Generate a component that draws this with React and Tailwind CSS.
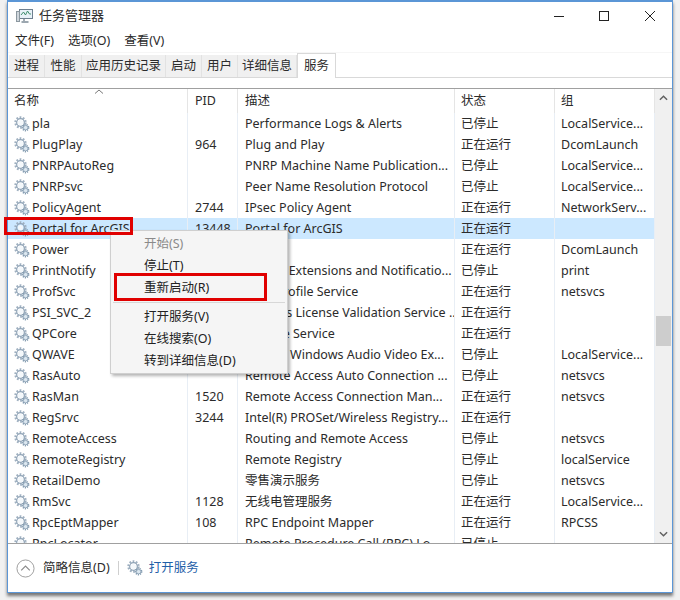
import React from 'react'

const rows = [
  ['pla', '', 'Performance Logs & Alerts', '已停止', 'LocalService...'],
  ['PlugPlay', '964', 'Plug and Play', '正在运行', 'DcomLaunch'],
  ['PNRPAutoReg', '', 'PNRP Machine Name Publication...', '已停止', 'LocalService...'],
  ['PNRPsvc', '', 'Peer Name Resolution Protocol', '已停止', 'LocalService...'],
  ['PolicyAgent', '2744', 'IPsec Policy Agent', '正在运行', 'NetworkServ...'],
  ['Portal for ArcGIS', '13448', 'Portal for ArcGIS', '正在运行', ''],
  ['Power', '', 'Power', '正在运行', 'DcomLaunch'],
  ['PrintNotify', '', 'Printer Extensions and Notificatio...', '已停止', 'print'],
  ['ProfSvc', '', 'User Profile Service', '正在运行', 'netsvcs'],
  ['PSI_SVC_2', '', 'Protexis License Validation Service ...', '正在运行', ''],
  ['QPCore', '', 'QPCore Service', '正在运行', ''],
  ['QWAVE', '', 'Quality Windows Audio Video Ex...', '已停止', 'LocalService...'],
  ['RasAuto', '', 'Remote Access Auto Connection ...', '已停止', 'netsvcs'],
  ['RasMan', '1520', 'Remote Access Connection Man...', '正在运行', 'netsvcs'],
  ['RegSrvc', '3244', 'Intel(R) PROSet/Wireless Registry...', '正在运行', ''],
  ['RemoteAccess', '', 'Routing and Remote Access', '已停止', 'netsvcs'],
  ['RemoteRegistry', '', 'Remote Registry', '已停止', 'localService'],
  ['RetailDemo', '', '零售演示服务', '已停止', 'netsvcs'],
  ['RmSvc', '1128', '无线电管理服务', '正在运行', 'LocalService...'],
  ['RpcEptMapper', '108', 'RPC Endpoint Mapper', '正在运行', 'RPCSS'],
  ['RpcLocator', '', 'Remote Procedure Call (RPC) Lo...', '已停止', ''],
]

const tabs = [
  ['进程', 'w-[36px]'],
  ['性能', 'w-[37px]'],
  ['应用历史记录', 'w-[84px]'],
  ['启动', 'w-[36px]'],
  ['用户', 'w-[36px]'],
  ['详细信息', 'w-[59px]'],
]

function Gear({ className }) {
  return (
    <svg viewBox="0 0 16 16" className={className} fill="none">
      <circle cx="6.5" cy="6.5" r="5" stroke="#9fb0c0" strokeWidth="2.4" strokeDasharray="1.7 1.45" />
      <circle cx="6.5" cy="6.5" r="3.8" stroke="#8fa3b6" strokeWidth="1.2" />
      <circle cx="6.5" cy="6.5" r="2.6" fill="#f4f8fb" />
      <circle cx="11.6" cy="11.6" r="3" stroke="#7f98ae" strokeWidth="1.6" strokeDasharray="1.2 0.9" />
      <circle cx="11.6" cy="11.6" r="2.2" fill="#dbe7f0" stroke="#8aa0b4" strokeWidth="0.8" />
    </svg>
  )
}

function AppIcon() {
  return (
    <svg viewBox="0 0 18 16" className="w-[18px] h-[16px]" fill="none">
      <rect x="3.5" y="1.5" width="13" height="9" fill="#e8f1f8" stroke="#6d7f8f" />
      <path d="M5 7l2.5-3 2 3 2-4 2 3h1.5" stroke="#3f8f6f" />
      <path d="M8 11v2M5.5 14h7" stroke="#7c8a96" strokeWidth="1.4" />
      <rect x="0.5" y="3.5" width="3" height="10" fill="#cfd6dc" stroke="#8b979f" />
    </svg>
  )
}

function MenuItem({ children, disabled }) {
  return (
    <div className={`h-[22px] pl-[33px] leading-[22px] ${disabled ? 'text-[#8a8a8a]' : 'text-[#222]'}`}>{children}</div>
  )
}

export default function App() {
  return (
    <div className="relative w-[680px] h-[600px] overflow-hidden bg-[#f1f1f1] pl-[7px] text-[12.5px] text-[#2b2b2b] font-['Noto_Sans','Noto_Sans_CJK_SC',sans-serif]">
      <div className="w-[666px] h-[593px] bg-white border border-[#5b96d6] border-t-2 flex flex-col shadow-[0_3px_3px_#777]">
        {/* title bar */}
        <div className="h-[28px] flex items-center pl-[8px] shrink-0">
          <AppIcon />
          <span className="ml-[5px] text-[13px]">任务管理器</span>
          <div className="ml-auto flex items-center">
            <svg viewBox="0 0 12 12" className="w-[12px] h-[12px] mr-[33px]"><path d="M1 6.5h10" stroke="#222" strokeWidth="1" /></svg>
            <svg viewBox="0 0 12 12" className="w-[12px] h-[12px] mr-[34px]"><rect x="1.5" y="1.5" width="9" height="9" fill="none" stroke="#222" /></svg>
            <svg viewBox="0 0 12 12" className="w-[12px] h-[12px] mr-[16px]"><path d="M1 1l10 10M11 1L1 11" stroke="#222" /></svg>
          </div>
        </div>
        {/* menu */}
        <div className="h-[22px] flex items-center gap-[14px] pl-[7px] shrink-0">
          <span>文件(F)</span>
          <span>选项(O)</span>
          <span>查看(V)</span>
        </div>
        {/* tabs */}
        <div className="h-[26px] flex items-end border-t border-[#f6f6f6] shrink-0 relative">
          <div className="flex-1 h-[25px] flex border-b border-[#d9d9d9] pl-px">
            {tabs.map(([t, w]) => (
              <div key={t} className={`${w} mt-[2px] h-[22px] bg-[#f0f0f0] border-r border-[#e2e2e2] flex items-center justify-center`}>{t}</div>
            ))}
            <div className="w-[39px] h-[25px] bg-white border border-b-0 border-[#d9d9d9] flex items-center justify-center -mb-px">服务</div>
          </div>
        </div>
        <div className="h-[10px] shrink-0" />
        {/* table */}
        <div className="h-[456px] flex border-t border-b border-[#a0a0a0] shrink-0">
          <div className="w-[647px] flex flex-col overflow-hidden">
            <div className="h-[24px] shrink-0 grid grid-cols-[180px_50px_217px_100px_100px] relative">
              <div className="border-r border-[#e5e5e5] pl-[6px] leading-[24px]">名称</div>
              <div className="border-r border-[#e5e5e5] pl-[7px] leading-[24px]">PID</div>
              <div className="border-r border-[#e5e5e5] pl-[7px] leading-[24px]">描述</div>
              <div className="border-r border-[#e5e5e5] pl-[6px] leading-[24px]">状态</div>
              <div className="border-r border-[#e5e5e5] pl-[6px] leading-[24px]">组</div>
              <svg viewBox="0 0 10 5" className="absolute left-[86px] top-0 w-[10px] h-[5px]" fill="none"><path d="M1 4.5l4-3.5 4 3.5" stroke="#777" /></svg>
            </div>
            <div className="flex-1 overflow-hidden">
              {rows.map((r) => (
                <div key={r[0]} className={`h-[21px] leading-[21px] grid grid-cols-[180px_50px_217px_100px_100px] ${r[0] === 'Portal for ArcGIS' ? 'bg-[#cce8ff]' : ''}`}>
                  <div className="border-r border-[#e8eef5] pl-[6px] flex items-center gap-[2px]">
                    <Gear className="w-[16px] h-[16px] shrink-0" />
                    <span>{r[0]}</span>
                  </div>
                  <div className="border-r border-[#e8eef5] pl-[7px]">{r[1]}</div>
                  <div className="border-r border-[#e8eef5] pl-[7px] whitespace-nowrap overflow-hidden">{r[2]}</div>
                  <div className="border-r border-[#e8eef5] pl-[6px]">{r[3]}</div>
                  <div className="border-r border-[#e8eef5] pl-[6px] whitespace-nowrap overflow-hidden">{r[4]}</div>
                </div>
              ))}
            </div>
          </div>
          {/* scrollbar */}
          <div className="w-[17px] bg-[#f0f0f0] flex flex-col items-center shrink-0">
            <svg viewBox="0 0 10 6" className="w-[9px] h-[6px] mt-[6px]" fill="none"><path d="M1 5l4-4 4 4" stroke="#606060" strokeWidth="1.6" /></svg>
            <div className="w-[15px] h-[30px] bg-[#cdcdcd] mt-[215px]" />
            <svg viewBox="0 0 10 6" className="w-[9px] h-[6px] mt-auto mb-[6px]" fill="none"><path d="M1 1l4 4 4-4" stroke="#606060" strokeWidth="1.6" /></svg>
          </div>
        </div>
        {/* footer */}
        <div className="flex-1 flex items-center pl-[8px]">
          <svg viewBox="0 0 20 20" className="w-[19px] h-[19px]" fill="none">
            <circle cx="10" cy="10" r="9" stroke="#9a9a9a" />
            <path d="M5.5 12l4.5-4.5 4.5 4.5" stroke="#8a8a8a" strokeWidth="1.2" />
          </svg>
          <span className="ml-[8px]">简略信息(D)</span>
          <div className="w-px h-[14px] bg-[#cfcfcf] ml-[8px]" />
          <Gear className="w-[16px] h-[16px] ml-[8px]" />
          <span className="ml-[6px] text-[#1f5fa8]">打开服务</span>
        </div>
      </div>

      {/* context menu */}
      <div className="absolute left-[110px] top-[230px] w-[178px] h-[144px] bg-[#f5f5f5] border border-[#cfcfcf] shadow-[2px_2px_3px_rgba(0,0,0,0.3)] py-[2px]">
        <MenuItem disabled>开始(S)</MenuItem>
        <MenuItem>停止(T)</MenuItem>
        <MenuItem>重新启动(R)</MenuItem>
        <div className="h-px bg-[#d7d7d7] mx-[2px] my-[3px]" />
        <MenuItem>打开服务(V)</MenuItem>
        <MenuItem>在线搜索(O)</MenuItem>
        <MenuItem>转到详细信息(D)</MenuItem>
      </div>

      {/* red annotation boxes */}
      <div className="absolute left-[4px] top-[217px] w-[129px] h-[18px] border-[3px] border-[#e00000]" />
      <div className="absolute left-[114px] top-[273px] w-[153px] h-[28px] border-[3px] border-[#e00000]" />
    </div>
  )
}
